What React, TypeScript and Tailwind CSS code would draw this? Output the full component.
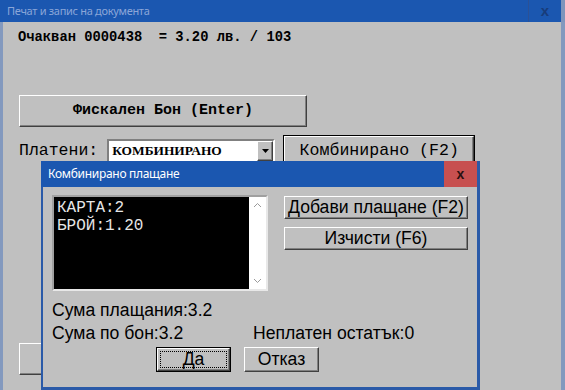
const raised =
  "border border-t-white border-l-white border-b-[#404040] border-r-[#404040] shadow-[inset_-1px_-1px_0_#808080] bg-[#c0c0c0]";

function ScrollArrow({ up }: { up?: boolean }) {
  return (
    <div className="flex h-[16px] items-center justify-center">
      <svg width="9" height="6" viewBox="0 0 9 6">
        <path
          d={up ? "M1 5 L4.5 1.5 L8 5" : "M1 1 L4.5 4.5 L8 1"}
          fill="none"
          stroke="#9a9a9a"
          strokeWidth="1"
        />
      </svg>
    </div>
  );
}

function Dialog() {
  return (
    <div className="absolute left-[41px] top-[161px] flex h-[229px] w-[439px] flex-col">
      <div className="flex h-[26px] shrink-0 items-center bg-[#1b57b0]">
        <span className="pl-[7px] text-[12px] tracking-[-0.3px] text-white" style={{ fontFamily: '"Noto Sans", sans-serif' }}>
          Комбинирано плащане
        </span>
        <div className="ml-auto flex h-full w-[33px] items-center justify-center bg-[#c75050] text-[14px] font-bold text-[#2a1010]" style={{ fontFamily: '"Liberation Sans", sans-serif' }}>
          x
        </div>
        <div className="h-full w-[3px] bg-[#2a5aa8]" />
      </div>
      <div
        className="flex flex-1 flex-col border-b-[3px] border-l-2 border-r-[3px] border-[#2a5aa8] bg-[#c0c0c0] text-[17.6px] text-black"
        style={{ fontFamily: '"Liberation Sans", Arial, sans-serif' }}
      >
        <div className="mt-[8px] flex">
          <div className="ml-[9px] flex h-[96px] w-[216px] border-2 border-t-[#a0a0a0] border-l-[#a0a0a0] border-b-[#e8e8e8] border-r-[#e8e8e8] bg-black">
            <div
              className="flex-1 pl-[3px] pt-[2px] text-[16px] leading-[18px] text-[#e6e6e6]"
              style={{ fontFamily: '"Liberation Mono", "Courier New", monospace' }}
            >
              <div>КАРТА:2</div>
              <div>БРОЙ:1.20</div>
            </div>
            <div className="flex w-[17px] flex-col justify-between bg-white">
              <ScrollArrow up />
              <ScrollArrow />
            </div>
          </div>
          <div className="ml-[16px] mt-px flex w-[184px] flex-col gap-[8px]">
            <div className={`${raised} flex h-[23px] items-center justify-center leading-none`}>Добави плащане (F2)</div>
            <div className={`${raised} flex h-[23px] items-center justify-center leading-none`}>Изчисти (F6)</div>
          </div>
        </div>
        <div className="ml-[9px] mt-[10px] leading-[18px]">Сума плащания:3.2</div>
        <div className="ml-[9px] mt-[5px] flex leading-[18px]">
          <span className="w-[201px]">Сума по бон:3.2</span>
          <span>Неплатен остатък:0</span>
        </div>
        <div className="ml-[113px] mt-[5px] flex gap-[13px]">
          <div className="flex h-[25px] w-[75px] border border-black">
            <div className={`${raised} flex flex-1 items-center justify-center p-[2px]`}>
              <div className="flex h-full w-full items-center justify-center border border-dotted border-black leading-none">Да</div>
            </div>
          </div>
          <div className={`${raised} flex h-[25px] w-[75px] items-center justify-center leading-none`}>Отказ</div>
        </div>
      </div>
    </div>
  );
}

export default function App() {
  const mono = { fontFamily: '"Liberation Mono", "Courier New", monospace' };
  return (
    <div className="relative flex h-[390px] w-[565px] flex-col overflow-hidden bg-[#c0c0c0]">
      <div className="flex h-[22px] shrink-0 items-center bg-[#1b57b0]">
        <span className="pl-[7px] text-[11px] tracking-[-0.3px] text-[#8ba6d8]" style={{ fontFamily: '"Noto Sans", sans-serif' }}>
          Печат и запис на документа
        </span>
        <div className="ml-auto flex h-full w-[33px] items-center justify-center border-l border-[#2b5196] text-[15px] font-bold text-[#183c7a]" style={{ fontFamily: '"Liberation Sans", sans-serif' }}>
          x
        </div>
        <div className="h-full w-[4px] bg-[#7f95bc]" />
      </div>
      <div className="flex flex-1 flex-col border-l-[3px] border-r-[4px] border-[#8399be] text-black" style={mono}>
        <div className="ml-[15px] mt-[8px] text-[13.8px] font-bold leading-[16px]">Очакван 0000438&nbsp; = 3.20 лв. / 103</div>
        <div className={`${raised} ml-[16px] mt-[49px] flex h-[32px] w-[288px] items-center justify-center text-[15px] font-bold`}>
          Фискален Бон (Enter)
        </div>
        <div className="mt-[8px] flex items-start">
          <span className="ml-[16px] mt-[6px] text-[16.5px] leading-[20px]">Платени:</span>
          <div className="ml-[9px] mt-[4px] flex h-[24px] w-[168px] border-2 border-t-[#808080] border-l-[#808080] border-b-white border-r-white bg-white">
            <span className="flex-1 pl-[3px] text-[13.4px] font-bold leading-[20px]" style={{ fontFamily: '"Liberation Serif", "Times New Roman", serif' }}>
              КОМБИНИРАНО
            </span>
            <div className={`${raised} flex w-[16px] items-center justify-center`}>
              <svg width="7" height="4" viewBox="0 0 7 4">
                <path d="M0 0 H7 L3.5 4 Z" fill="black" />
              </svg>
            </div>
          </div>
          <div className="ml-[8px] flex h-[32px] w-[192px] border border-black">
            <div className={`${raised} flex flex-1 items-start justify-center pt-[5px] text-[16.6px] leading-[18px]`}>Комбинирано (F2)</div>
          </div>
        </div>
        <div className={`${raised} ml-[16px] mt-[176px] h-[32px] w-[288px]`} />
      </div>
      <Dialog />
    </div>
  );
}
